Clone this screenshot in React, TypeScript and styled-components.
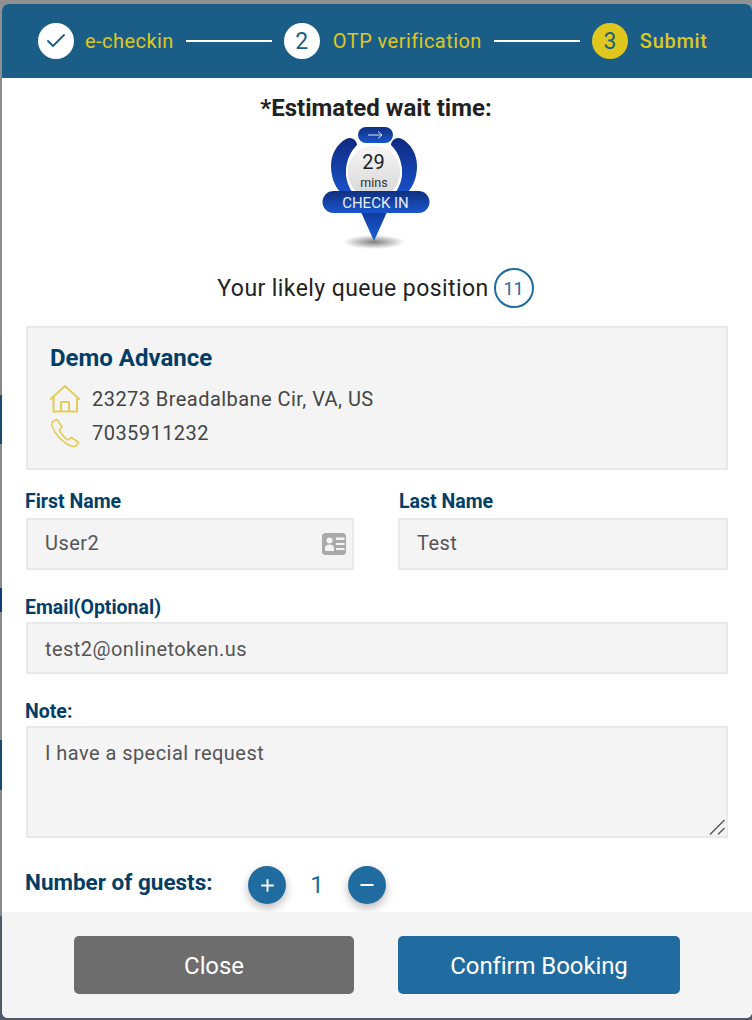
import React from "react";
import styled, { createGlobalStyle } from "styled-components";
import { Check, Plus, Minus } from "lucide-react";

const Global = createGlobalStyle`
  html, body { margin: 0; padding: 0; height: 1020px; overflow: hidden; }
  body {
    font-family: Roboto, "Liberation Sans", sans-serif;
    background: linear-gradient(to bottom,
      #8f9090 0, #8a8a8a 395px,
      #1a4a6e 395px, #1a4a6e 444px,
      #8a8a8a 444px, #8a8a8a 588px,
      #123a78 588px, #123a78 612px,
      #8a8a8a 612px, #8a8a8a 740px,
      #1a4a6e 740px, #1a4a6e 790px,
      #8a8a8a 790px, #8a8a8a 916px,
      #505a68 916px, #505a68 100%);
  }
  * { box-sizing: border-box; }
`;

const Modal = styled.div`
  width: 750px;
  height: 1014px;
  margin: 4px 0 0 2px;
  border-radius: 6px;
  background: #fff;
  overflow: hidden;
  display: flex;
  flex-direction: column;
`;

const Stepper = styled.header`
  height: 74px;
  flex: none;
  background: #1a5e88;
  display: flex;
  align-items: center;
  padding-left: 36px;
`;

const StepCircle = styled.span<{ $active?: boolean }>`
  width: 36px;
  height: 36px;
  border-radius: 50%;
  flex: none;
  display: flex;
  align-items: center;
  justify-content: center;
  font-size: 23px;
  background: ${(p) => (p.$active ? "#dfc71e" : "#fff")};
  color: #1a5e88;
`;

const StepLabel = styled.span<{ $strong?: boolean; $gap: number }>`
  margin-left: ${(p) => p.$gap}px;
  font-size: 20px;
  letter-spacing: ${(p) => (p.$strong ? 0.7 : 0.45)}px;
  font-weight: ${(p) => (p.$strong ? 500 : 400)};
  color: #dfc71e;
  white-space: nowrap;
`;

const StepLine = styled.span`
  width: 86px;
  height: 2px;
  margin: 0 12px;
  flex: none;
  background: #fff;
`;

const Content = styled.main`
  flex: 1;
  padding: 0 24px;
  display: flex;
  flex-direction: column;
`;

const WaitTitle = styled.h2`
  margin: 16px 0 0;
  padding-right: 2px;
  font-size: 24px;
  line-height: 28px;
  font-weight: 700;
  text-align: center;
  color: #222;
`;

const PinWrap = styled.div`
  height: 128px;
  display: flex;
  justify-content: center;
`;

const QueueRow = styled.div`
  display: flex;
  align-items: center;
  justify-content: center;
  gap: 5px;
  margin-top: 18px;
  padding-right: 3px;
  font-size: 23px;
  letter-spacing: 0.42px;
  color: #222;
  height: 40px;
`;

const QueueBadge = styled.span`
  width: 40px;
  height: 40px;
  border: 2px solid #206b9f;
  border-radius: 50%;
  display: flex;
  align-items: center;
  justify-content: center;
  font-size: 18px;
  color: #206b9f;
  letter-spacing: 0;
`;

const Card = styled.section`
  margin-top: 18px;
  width: 702px;
  height: 144px;
  background: #f4f4f4;
  border: 2px solid #e9e9e9;
  padding: 14px 22px;
`;

const CardTitle = styled.h3`
  margin: 0 0 8px;
  font-size: 24px;
  line-height: 32px;
  font-weight: 700;
  color: #033e66;
`;

const InfoRow = styled.div`
  display: flex;
  align-items: center;
  gap: 12px;
  height: 34px;
  font-size: 20px;
  letter-spacing: 0.45px;
  color: #444;
`;

const InfoIcon = styled.svg<{ $weight: number }>`
  width: 30px;
  height: 30px;
  flex: none;
  fill: none;
  stroke: #e3cc5a;
  stroke-width: ${(p) => p.$weight};
  stroke-linejoin: round;
  stroke-linecap: round;
`;

const NameGrid = styled.div`
  display: grid;
  grid-template-columns: 328px 330px;
  column-gap: 44px;
  margin-top: 21px;
`;

const Field = styled.div<{ $top?: number }>`
  position: relative;
  margin-top: ${(p) => p.$top ?? 0}px;
`;

const Label = styled.label<{ $shift?: number; $gap?: number }>`
  display: block;
  margin: 0 0 ${(p) => p.$gap ?? 3}px ${(p) => p.$shift ?? -1}px;
  font-size: 19.5px;
  line-height: 22px;
  font-weight: 700;
  color: #033e66;
  white-space: nowrap;
`;

const inputStyles = `
  display: block;
  width: 100%;
  background: #f4f4f4;
  border: 2px solid #e9e9e9;
  border-radius: 0;
  outline: none;
  font-family: Roboto, "Liberation Sans", sans-serif;
  font-size: 20px;
  letter-spacing: 0.45px;
  color: #555;
`;

const TextInput = styled.input<{ $nudge: number }>`
  ${inputStyles}
  height: 52px;
  padding: ${(p) => (p.$nudge > 0 ? p.$nudge : 0)}px 17px ${(p) => (p.$nudge < 0 ? -p.$nudge : 0)}px;
`;

const NoteArea = styled.textarea`
  ${inputStyles}
  height: 112px;
  padding: 12px 17px 0;
  line-height: 26px;
  resize: none;
`;

const CardIcon = styled.svg`
  position: absolute;
  right: 8px;
  bottom: 15px;
  width: 24px;
  height: 22px;
`;

const GripIcon = styled.svg`
  position: absolute;
  right: 3px;
  bottom: 3px;
  width: 16px;
  height: 16px;
  stroke: #555;
  stroke-width: 1.4;
  fill: none;
`;

const GuestRow = styled.div`
  display: flex;
  align-items: center;
  margin-top: 28px;
  margin-left: -1px;
  height: 38px;
`;

const GuestLabel = styled.span`
  width: 223px;
  margin-bottom: 7px;
  font-size: 22.5px;
  font-weight: 700;
  color: #033e66;
  white-space: nowrap;
`;

const RoundButton = styled.button`
  width: 38px;
  height: 38px;
  border: none;
  padding: 0;
  border-radius: 50%;
  background: #206b9f;
  color: #fff;
  display: flex;
  align-items: center;
  justify-content: center;
  box-shadow: 0 4px 10px rgba(0, 0, 0, 0.28);
`;

const GuestCount = styled.span`
  width: 62px;
  text-align: center;
  font-size: 24px;
  color: #206b9f;
`;

const Footer = styled.footer`
  height: 106px;
  flex: none;
  background: #f4f4f4;
  display: flex;
  padding: 24px 0 0 72px;
  gap: 44px;
`;

const ActionButton = styled.button<{ $primary?: boolean; $width: number }>`
  width: ${(p) => p.$width}px;
  height: 58px;
  border: none;
  border-radius: 5px;
  padding: 2px 0 0;
  background: ${(p) => (p.$primary ? "#206b9f" : "#6d6d6d")};
  color: #fff;
  font-family: Roboto, "Liberation Sans", sans-serif;
  font-size: 24px;
  letter-spacing: -0.1px;
`;

const PinText = styled.text<{ $size: number; $fill: string }>`
  font-family: Roboto, "Liberation Sans", sans-serif;
  font-size: ${(p) => p.$size}px;
  fill: ${(p) => p.$fill};
  text-anchor: middle;
`;

const PinGraphic = () => (
  <svg width="150" height="128" viewBox="302 122 150 128">
    <defs>
      <linearGradient id="arc" x1="0" y1="0" x2="0" y2="1">
        <stop offset="0" stopColor="#0f2a80" />
        <stop offset="1" stopColor="#1850c8" />
      </linearGradient>
      <linearGradient id="pill" x1="0" y1="0" x2="0" y2="1">
        <stop offset="0" stopColor="#10307f" />
        <stop offset="1" stopColor="#1a55cc" />
      </linearGradient>
      <linearGradient id="tip" x1="0" y1="0" x2="0" y2="1">
        <stop offset="0" stopColor="#0f3a9c" />
        <stop offset="1" stopColor="#1c60d8" />
      </linearGradient>
      <linearGradient id="dial" x1="0" y1="0" x2="0" y2="1">
        <stop offset="0" stopColor="#f6f6f6" />
        <stop offset="1" stopColor="#d6d6d6" />
      </linearGradient>
      <radialGradient id="shade">
        <stop offset="0" stopColor="#000" stopOpacity="0.5" />
        <stop offset="1" stopColor="#000" stopOpacity="0" />
      </radialGradient>
    </defs>
    <ellipse cx="374" cy="242" rx="31" ry="7" fill="url(#shade)" />
    <path d="M361 212 L387 212 L374 241 Z" fill="url(#tip)" />
    <path d="M346 139 C351 136 357 140 357 145 C351 151 346 160 346 172 C346 181 349 187 352 192 L340 192 C334 185 331 176 331 166 C331 154 337 144 346 139 Z" fill="url(#arc)" />
    <path d="M402 139 C397 136 391 140 391 145 C397 151 402 160 402 172 C402 181 399 187 396 192 L408 192 C414 185 417 176 417 166 C417 154 411 144 402 139 Z" fill="url(#arc)" />
    <rect x="358" y="127" width="35" height="16" rx="8" fill="url(#pill)" />
    <path d="M368 135 H382 M378 131.5 L382 135 L378 138.5" fill="none" stroke="#dfe6f7" strokeWidth="1" />
    <circle cx="374" cy="172" r="27" fill="url(#dial)" stroke="#fff" strokeWidth="1.5" />
    <PinText x="373.5" y="169" $size={20} $fill="#222">29</PinText>
    <PinText x="374" y="187" $size={12.5} $fill="#333">mins</PinText>
    <rect x="322.5" y="191" width="107" height="22" rx="11" fill="url(#pill)" />
    <PinText x="375.5" y="208" $size={15} $fill="#e8edf8">CHECK IN</PinText>
  </svg>
);

export default function App() {
  return (
    <>
      <Global />
      <Modal>
        <Stepper>
          <StepCircle><Check size={24} strokeWidth={1.8} /></StepCircle>
          <StepLabel $gap={11}>e-checkin</StepLabel>
          <StepLine />
          <StepCircle>2</StepCircle>
          <StepLabel $gap={13}>OTP verification</StepLabel>
          <StepLine />
          <StepCircle $active>3</StepCircle>
          <StepLabel $strong $gap={12}>Submit</StepLabel>
        </Stepper>
        <Content>
          <WaitTitle>*Estimated wait time:</WaitTitle>
          <PinWrap><PinGraphic /></PinWrap>
          <QueueRow>
            Your likely queue position
            <QueueBadge>11</QueueBadge>
          </QueueRow>
          <Card>
            <CardTitle>Demo Advance</CardTitle>
            <InfoRow>
              <InfoIcon $weight={2} viewBox="0 0 30 30">
                <path d="M0.8 15 L15 2 L29.2 15 M3.5 13 V27.5 H27 V13 M11 27.5 V18 H19 V27.5" />
              </InfoIcon>
              23273 Breadalbane Cir, VA, US
            </InfoRow>
            <InfoRow>
              <InfoIcon $weight={1.6} viewBox="0 0 30 30">
                <path d="M3 3.5 L7 1.5 L12 9 L9.5 12 C10.5 15 14.5 20 18 22 L21.5 19.5 L28.5 24.5 L26 28 C24 29 21 28.5 17 26 C10 21.5 4.5 14.5 2 8 C1.5 6 2 4.5 3 3.5 Z" />
              </InfoIcon>
              7035911232
            </InfoRow>
          </Card>
          <NameGrid>
            <Field>
              <Label $gap={5}>First Name</Label>
              <TextInput $nudge={-2} readOnly value="User2" />
              <CardIcon viewBox="0 0 24 22">
                <rect width="24" height="22" rx="3.5" fill="#aaa" />
                <circle cx="7.5" cy="7.5" r="3" fill="#f4f4f4" />
                <path d="M3 18 V15.5 C3 12.5 5 11.5 7.5 11.5 S12 12.5 12 15.5 V18 Z" fill="#f4f4f4" />
                <path d="M14 4.5 H22.5 V7 H14 Z M14 10 H22.5 V12 H14 Z M14 15 H22.5 V17 H14 Z" fill="#f4f4f4" />
              </CardIcon>
            </Field>
            <Field>
              <Label $gap={5} $shift={1}>Last Name</Label>
              <TextInput $nudge={-2} readOnly value="Test" />
            </Field>
          </NameGrid>
          <Field $top={27}>
            <Label>Email(Optional)</Label>
            <TextInput $nudge={2} readOnly value="test2@onlinetoken.us" />
          </Field>
          <Field $top={27}>
            <Label>Note:</Label>
            <NoteArea readOnly value="I have a special request" />
            <GripIcon viewBox="0 0 16 16">
              <path d="M1 15.5 L15.5 1 M9 15.5 L15.5 9" />
            </GripIcon>
          </Field>
          <GuestRow>
            <GuestLabel>Number of guests:</GuestLabel>
            <RoundButton aria-label="add"><Plus size={19} strokeWidth={2.4} /></RoundButton>
            <GuestCount>1</GuestCount>
            <RoundButton aria-label="remove"><Minus size={20} strokeWidth={2.4} /></RoundButton>
          </GuestRow>
        </Content>
        <Footer>
          <ActionButton $width={280}>Close</ActionButton>
          <ActionButton $primary $width={282}>Confirm Booking</ActionButton>
        </Footer>
      </Modal>
    </>
  );
}
